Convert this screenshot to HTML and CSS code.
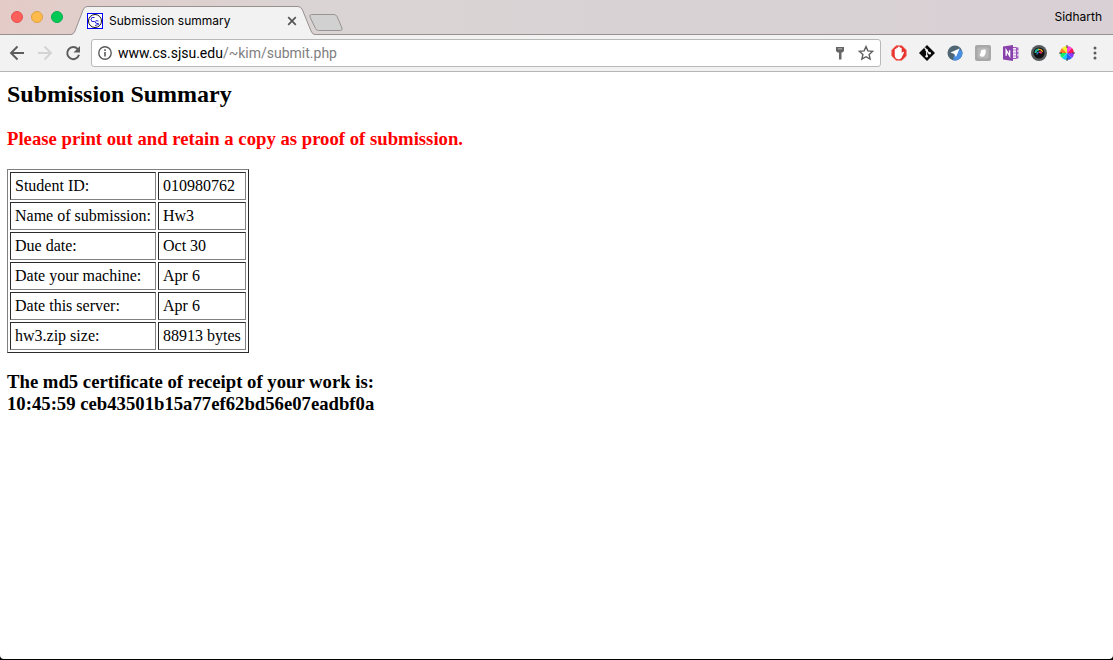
FILE: index.html
```html
<!DOCTYPE html>
<html lang="en">
<head>
<meta charset="utf-8">
<title>Submission summary</title>
<link rel="stylesheet" href="styles.css">
</head>
<body>
<div class="window">
  <header class="tabstrip">
    <div class="lights">
      <button class="light close" aria-label="Close window"></button>
      <button class="light minimize" aria-label="Minimize window"></button>
      <button class="light expand" aria-label="Expand window"></button>
    </div>
    <div class="tab">
      <svg class="tab-shape" width="244" height="29" viewBox="0 0 244 29" aria-hidden="true">
        <path d="M0 28.5H1Q3 28 4 25L12 4Q13.500 .5 16 .5H227Q230 .5 231.500 4L240 25Q241.500 28.500 244 28.500V29H0Z" fill="#f2f2f2"/>
        <path d="M0 28.500Q2.500 28.500 4 25L12 4Q13.500 .5 16 .5H227Q230 .5 231.500 4L240 25Q241.500 28.500 244 28.500" fill="none" stroke="#96908f"/>
      </svg>
      <svg class="favicon" width="16" height="16" viewBox="0 0 16 16" aria-hidden="true">
        <rect x=".5" y=".5" width="15" height="15" fill="#fff" stroke="#00f"/>
        <circle cx="8" cy="8" r="6.500" fill="none" stroke="#111"/>
        <path d="M7.500 4.500Q4 3.500 4 6.500T7.500 8.500M11.500 8Q8 7 8 8.700T11 10.700T8 12.500" fill="none" stroke="#22d"/>
      </svg>
      <span class="tab-title">Submission summary</span>
      <button class="tab-close" aria-label="Close tab"><svg width="10" height="10" viewBox="0 0 10 10"><path d="M1.200 1.200l7.600 7.600M8.800 1.200l-7.600 7.600" stroke="#555" stroke-width="1.700"/></svg></button>
    </div>
    <button class="new-tab" aria-label="New tab"><svg width="34" height="17" viewBox="0 0 34 17"><path d="M2.500 .5H25Q27 .5 28 2.500L33 14Q33.500 16.500 31.500 16.500H9.500Q7.500 16.500 6.500 14.500L1 3Q.3 .5 2.500 .5Z" fill="#d0d1d0" stroke="#999493"/></svg></button>
    <button class="profile">Sidharth</button>
  </header>
  <div class="toolbar">
    <button class="tool" aria-label="Back"><svg width="16" height="16" viewBox="0 0 16 16"><path d="M15 8H2M8.500 1.500L2 8l6.500 6.500" fill="none" stroke="#5c5c5c" stroke-width="1.900"/></svg></button>
    <button class="tool" aria-label="Forward"><svg width="16" height="16" viewBox="0 0 16 16"><path d="M1 8h13M7.500 1.500L14 8l-6.500 6.500" fill="none" stroke="#d3d3d3" stroke-width="1.900"/></svg></button>
    <button class="tool" aria-label="Reload"><svg width="16" height="16" viewBox="0 0 16 16"><path d="M12.800 4.200A6 6 0 1 0 14 9.800" fill="none" stroke="#5c5c5c" stroke-width="2"/><path d="M15 1v6.500H8.500Z" fill="#5c5c5c"/></svg></button>
    <div class="omnibox">
      <svg width="14" height="14" viewBox="0 0 14 14" aria-hidden="true"><circle cx="7" cy="7" r="6.200" fill="none" stroke="#5a5a5a" stroke-width="1.400"/><path d="M7 6v4.500M7 3.300v1.600" stroke="#5a5a5a" stroke-width="1.600"/></svg>
      <span class="url"><span class="host">www.cs.sjsu.edu</span>/~kim/submit.php</span>
      <button class="tool" aria-label="Saved password"><svg width="10" height="14" viewBox="0 0 10 14"><path d="M1 1h8v4L7.500 6.500h-5L1 5Z" fill="#666"/><path d="M4 6h2.500v7.500H4Z" fill="#666"/><path d="M3 2.800h4" stroke="#ccc" stroke-width=".8"/></svg></button>
      <button class="tool" aria-label="Bookmark this page"><svg width="16" height="16" viewBox="0 0 16 16"><path d="M8 1.600l1.900 4.300 4.700.5-3.500 3.100 1 4.600L8 11.700l-4.100 2.400 1-4.600-3.500-3.100 4.700-.5Z" fill="none" stroke="#5e5e5e" stroke-width="1.400"/></svg></button>
    </div>
    <button class="tool" aria-label="Ad blocker"><svg width="16" height="16" viewBox="0 0 16 16"><path d="M5 .8h6L15.200 5v6L11 15.200H5L.8 11V5Z" fill="#e8312c" stroke="#f26a62" stroke-width=".8"/><path d="M3.700 9V4.500Q4.500 3.200 5.300 4.500V3Q6.100 1.800 7 3V2Q7.900 1 8.900 2V3Q9.800 2 10.700 3.300V8L12 6.800Q13.500 6.500 12.800 8L10.700 12.500Q9.800 14.200 8 14.200Q3.700 14.200 3.700 10Z" fill="#fff"/></svg></button>
    <button class="tool" aria-label="Git"><svg width="16" height="16" viewBox="0 0 16 16"><path d="M8 0l8 8-8 8-8-8Z" fill="#090909"/><path d="M5.500 2.500L7.700 5V11M7.700 5.500L10.500 8.300" stroke="#f2f2f2" stroke-width="1.200" fill="none"/><circle cx="7.700" cy="11.300" r="1.300" fill="#f2f2f2"/><circle cx="10.700" cy="8.300" r="1.300" fill="#f2f2f2"/><circle cx="7.700" cy="5.200" r="1.200" fill="#f2f2f2"/></svg></button>
    <button class="tool" aria-label="Location"><svg width="16" height="16" viewBox="0 0 16 16"><circle cx="8" cy="8" r="7.500" fill="#506773"/><path d="M12 3.500L15.300 6.500A7.500 7.500 0 0 1 6 15.200L7.500 9Z" fill="#4a90e2"/><path d="M12.500 3.500L9 12 7.300 9 3.500 7.500Z" fill="#fff"/></svg></button>
    <button class="tool" aria-label="Disabled extension"><svg width="16" height="16" viewBox="0 0 16 16"><rect width="16" height="16" rx="2" fill="#a8a8a8"/><rect x="2.500" y="2.500" width="11" height="11" rx="2" fill="#b8b8b8"/><path d="M6 5.500Q7.500 4 10.500 4.500Q11.500 9 8.500 11.500Q5.500 12.500 4.500 10Q6 8 6 5.500Z" fill="#fff"/></svg></button>
    <button class="tool" aria-label="OneNote clipper"><svg width="16" height="16" viewBox="0 0 16 16"><path d="M9 2.500h4.500v11H9Z" fill="#f5eafb" stroke="#9950b7"/><path d="M10 5h3M10 8h3M10 11h3" stroke="#b985cf"/><path d="M14 2.500h1.500v3H14ZM14 6.500h1.500v3H14ZM14 10.500h1.500v3H14Z" fill="#a867c4"/><path d="M0 1.500L10 0v16L0 14.500Z" fill="#8840aa"/><path d="M3.200 10.800V5.200L6.600 10.800V5.200" fill="none" stroke="#fff" stroke-width="1.400"/></svg></button>
    <button class="tool" aria-label="Camera"><svg width="16" height="16" viewBox="0 0 16 16"><circle cx="8" cy="8" r="8" fill="#555a5c"/><circle cx="8" cy="8" r="5.500" fill="#111"/><path d="M4.500 8A3.600 3.600 0 0 1 8 4.500" fill="none" stroke="#20bd9b" stroke-width="1.800"/><path d="M7.500 4.500Q10.500 4 11.500 7" fill="none" stroke="#f5ad22" stroke-width="1.300"/><path d="M8 7.500Q9.500 6.500 10.500 8.500" fill="none" stroke="#ed2965" stroke-width="1.800"/><path d="M6 9.500Q6 8 7.500 7" fill="none" stroke="#238de0" stroke-width="1.200"/></svg></button>
    <button class="tool" aria-label="Color picker"><svg width="16" height="16" viewBox="0 0 16 16"><path d="M8 8V1A7 7 0 0 1 13 3Z" fill="#ff43e0"/><path d="M8 8L13 3A7 7 0 0 1 15 8Z" fill="#fc1659"/><path d="M8 8h7A7 7 0 0 1 13 13Z" fill="#8c35ff"/><path d="M8 8l5 5A7 7 0 0 1 8 15Z" fill="#2860fa"/><path d="M8 8v7A7 7 0 0 1 3 13Z" fill="#16c8ff"/><path d="M8 8l-5 5A7 7 0 0 1 1 8Z" fill="#15ed6a"/><path d="M8 8H1A7 7 0 0 1 3 3Z" fill="#ff7c22"/><path d="M8 8L3 3A7 7 0 0 1 8 1Z" fill="#f6f52e"/><path d="M8 0v3M8 13v3M0 8h3M13 8h3" stroke="#444"/></svg></button>
    <button class="tool" aria-label="Menu"><svg width="16" height="16" viewBox="0 0 16 16"><g fill="#5c5c5c"><circle cx="8" cy="3" r="1.500"/><circle cx="8" cy="8" r="1.500"/><circle cx="8" cy="13" r="1.500"/></g></svg></button>
  </div>
  <main class="page">
    <h2 class="page-title">Submission Summary</h2>
    <h3 class="notice warning">Please print out and retain a copy as proof of submission.</h3>
    <table class="summary">
      <tr><td>Student ID:</td><td>010980762</td></tr>
      <tr><td>Name of submission:</td><td>Hw3</td></tr>
      <tr><td>Due date:</td><td>Oct 30</td></tr>
      <tr><td>Date your machine:</td><td>Apr 6</td></tr>
      <tr><td>Date this server:</td><td>Apr 6</td></tr>
      <tr><td>hw3.zip size:</td><td>88913 bytes</td></tr>
    </table>
    <h3 class="notice">The md5 certificate of receipt of your work is:<br>10:45:59 ceb43501b15a77ef62bd56e07eadbf0a</h3>
  </main>
</div>
</body>
</html>
```
FILE: styles.css
```css
* { box-sizing: border-box; }

body {
  margin: 0;
  background: #000;
  color: #000;
  font-family: "Liberation Serif", "Times New Roman", serif;
}

button {
  padding: 0;
  border: 0;
  background: none;
  color: inherit;
  font: inherit;
}

svg { display: block; flex: none; }

.window {
  display: flex;
  flex-direction: column;
  min-height: calc(100vh - 1px);
  overflow: hidden;
  border-radius: 0 0 4px 4px;
  background: #fff;
}

.tabstrip {
  display: flex;
  align-items: flex-end;
  height: 35px;
  border-bottom: 1px solid #96908f;
  background: linear-gradient(90deg, #e4cbc7 0%, #dfcfcc 10%, #dad4d5 30%, #d8d0d4 100%);
  font-family: Inter, sans-serif;
  font-size: 12px;
  line-height: 16px;
}

.lights {
  display: flex;
  gap: 8px;
  align-self: flex-start;
  padding: 11px 8px 0 11px;
}

.light {
  width: 12px;
  height: 12px;
  border: 1px solid;
  border-radius: 50%;
}

.close { background: #ff5f5b; border-color: #e3504d; }
.minimize { background: #febb4b; border-color: #dfa043; }
.expand { background: #00ca56; border-color: #00ae4a; }

.tab {
  position: relative;
  display: flex;
  align-items: center;
  width: 244px;
  height: 29px;
  margin-bottom: -1px;
  padding: 0 18px 0 16px;
}

.tab-shape { position: absolute; inset: 0; }
.favicon { position: relative; }

.tab-title {
  position: relative;
  flex: 1;
  padding-left: 6px;
  white-space: nowrap;
}

.tab-close { position: relative; }

.new-tab { margin: 0 0 3px -6px; }

.profile {
  align-self: center;
  margin-left: auto;
  padding-right: 11px;
}

.toolbar {
  display: flex;
  align-items: center;
  height: 37px;
  padding: 0 4px 0 3px;
  border-bottom: 1px solid #b5b5b5;
  background: #f2f2f2;
}

.tool {
  display: flex;
  flex: none;
  align-items: center;
  justify-content: center;
  width: 28px;
  height: 28px;
}

.omnibox {
  display: flex;
  flex: 1;
  align-items: center;
  height: 28px;
  margin: 0 4px;
  padding: 0 1px 0 6px;
  border: 1px solid #b8b8b8;
  border-radius: 3px;
  background: #fff;
  font-family: Roboto, sans-serif;
  font-size: 14px;
}

.omnibox .tool { width: 26px; }

.url {
  flex: 1;
  padding-left: 6px;
  color: #808080;
}

.host { color: #000; }

.page { padding: 8px 7px; }

.page-title {
  margin: 0 0 20px;
  font-size: 24px;
  line-height: 28px;
}

.notice {
  margin: 0 0 19px;
  line-height: 22px;
}

.warning { color: #f00; }

.summary {
  margin-bottom: 18px;
  border: 1px solid;
  border-color: #808080 #2b2b2b #2b2b2b #808080;
  border-spacing: 2px;
  font-size: 16px;
  line-height: 18px;
}

.summary td {
  padding: 4px;
  border: 1px solid;
  border-color: #2b2b2b #808080 #808080 #2b2b2b;
}
```
